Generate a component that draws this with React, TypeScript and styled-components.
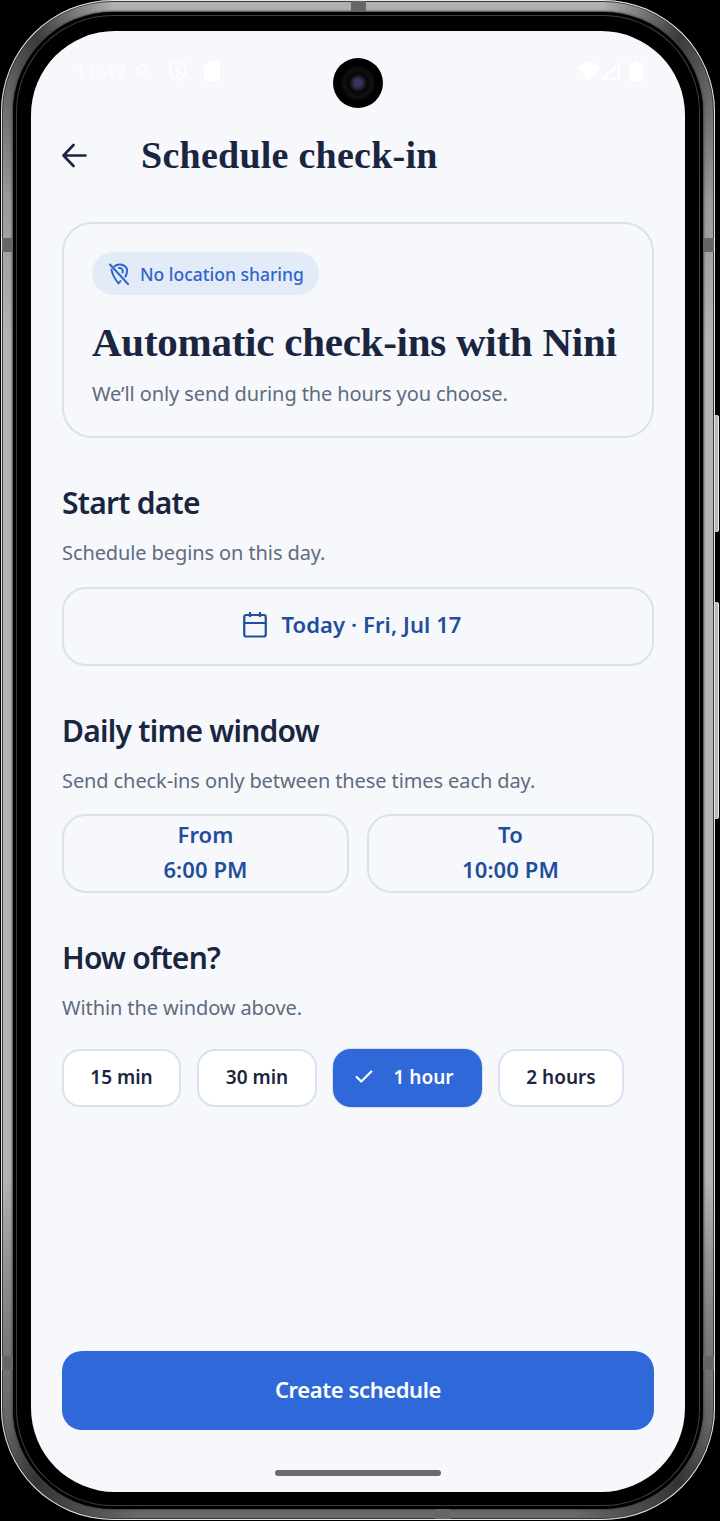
import React from 'react';
import styled, { createGlobalStyle } from 'styled-components';
import { Check } from 'lucide-react';

const GlobalStyle = createGlobalStyle`
  html, body {
    margin: 0;
    padding: 0;
    background: #000;
  }
  * {
    box-sizing: border-box;
  }
`;

const sans = `"Noto Sans", "Open Sans", sans-serif`;
const serif = `"Liberation Serif", "Noto Serif", serif`;

const Page = styled.div`
  width: 720px;
  height: 1521px;
  padding: 0 5px 1px 1px;
  background: #000;
  overflow: hidden;
`;

const Device = styled.div`
  position: relative;
  width: 714px;
  height: 1520px;
  padding: 12px 12px 11px 12px;
  border-radius: 112px;
  background: conic-gradient(
    #b0b0b0 0deg 18deg,
    #3a3a3a 24deg,
    #9a9a9a 32deg,
    #b4b4b4 40deg 140deg,
    #666 152deg,
    #333 156deg,
    #6a6a6a 164deg 196deg,
    #333 204deg,
    #666 208deg,
    #b4b4b4 220deg 320deg,
    #9a9a9a 328deg,
    #3a3a3a 336deg,
    #b0b0b0 342deg
  );
  box-shadow: inset 0 0 0 1px #e4e4e4, inset 0 0 0 2px #3a3a3a;
`;

const Bezel = styled.div`
  height: 100%;
  padding: 19px 18px 17px 18px;
  border-radius: 100px;
  background: #000;
  box-shadow: 0 0 2px 1px #444, inset 0 0 0 3px #000, inset 0 0 0 4px #3e3e3e;
`;

const Screen = styled.div`
  position: relative;
  height: 100%;
  padding: 0 31px;
  display: flex;
  flex-direction: column;
  border-radius: 84px;
  background: #f6f8fc;
  overflow: hidden;
`;

const Antenna = styled.span<{ $side: 'top' | 'bottom' | 'left' | 'right'; $at: number }>`
  position: absolute;
  background: #666;
  ${p =>
    p.$side === 'left' || p.$side === 'right'
      ? `top: ${p.$at}px; height: 14px; width: 11px; ${p.$side}: 1px;`
      : `left: ${p.$at}px; width: 15px; height: 10px; ${p.$side}: 1px;`}
`;

const SideKey = styled.span<{ $top: number; $height: number }>`
  position: absolute;
  right: -4px;
  top: ${p => p.$top}px;
  height: ${p => p.$height}px;
  width: 4px;
  border-radius: 0 3px 3px 0;
  background: #b9b9b9;
  box-shadow: inset -1px 0 0 #f2f2f2;
`;

const Camera = styled.div`
  position: absolute;
  top: 27px;
  left: 302px;
  width: 50px;
  height: 50px;
  border-radius: 50%;
  background: radial-gradient(circle, #3a3560 0 3px, #1a1a24 7px, #060606 9px, #111 14px, #000 18px);
`;

const StatusBar = styled.div`
  height: 80px;
  margin: 0 11px 0 13px;
  flex: none;
  display: flex;
  align-items: center;
  justify-content: space-between;
  color: #ffffff;
`;

const StatusGroup = styled.div<{ $gap: number }>`
  display: flex;
  align-items: center;
  gap: ${p => p.$gap}px;
`;

const StatusTime = styled.span`
  margin-right: -7px;
  font-family: ${sans};
  font-size: 20px;
  opacity: 0.85;
`;

const Header = styled.header`
  height: 88px;
  flex: none;
  display: flex;
  align-items: center;
  gap: 54px;
  color: #1a2540;
`;

const ScreenTitle = styled.h1`
  margin: 0;
  font-family: ${serif};
  font-size: 38px;
  font-weight: 700;
  letter-spacing: 0.25px;
  color: #1a2540;
`;

const IntroCard = styled.section`
  flex: none;
  height: 216px;
  margin-top: 23px;
  padding: 28px 28px 0;
  border: 2px solid #d7e2f0;
  border-radius: 30px;
`;

const Badge = styled.div`
  display: inline-flex;
  align-items: center;
  gap: 11px;
  height: 43px;
  padding: 0 15px 0 17px;
  border-radius: 22px;
  background: #e3ebf9;
  color: #2f66c8;
  font-family: ${sans};
  font-size: 17.5px;
  font-weight: 500;
`;

const IntroTitle = styled.h2`
  margin: 21px 0 0;
  font-family: ${serif};
  font-size: 41px;
  line-height: 52px;
  font-weight: 700;
  letter-spacing: -0.25px;
  white-space: nowrap;
  color: #1a2540;
`;

const Hint = styled.p`
  margin: 0;
  font-family: ${sans};
  font-size: 20px;
  line-height: 28px;
  letter-spacing: -0.1px;
  color: #5f6b7e;
`;

const IntroHint = styled(Hint)`
  margin-top: 12px;
`;

const Section = styled.section`
  flex: none;
  margin-top: 43px;
  display: flex;
  flex-direction: column;
`;

const SectionTitle = styled.h3`
  margin: 0 0 14px;
  font-family: ${sans};
  font-size: 30px;
  line-height: 44px;
  font-weight: 600;
  letter-spacing: -0.75px;
  color: #1a2540;
`;

const OutlineButton = styled.button`
  width: 100%;
  height: 79px;
  padding: 0 0 4px;
  border: 2px solid #d7e2f0;
  border-radius: 24px;
  background: transparent;
  color: #1f4e9c;
  font-family: ${sans};
  font-size: 22px;
  font-weight: 600;
  letter-spacing: 0.1px;
  line-height: 35px;
  display: flex;
  align-items: center;
  justify-content: center;
`;

const DateButton = styled(OutlineButton)`
  margin-top: 20px;
  padding-right: 11px;
  gap: 14px;
`;

const TimeRow = styled.div`
  display: grid;
  grid-template-columns: 1fr 1fr;
  gap: 18px;
  margin-top: 19px;
`;

const TimeButton = styled(OutlineButton)`
  flex-direction: column;
`;

const ChipRow = styled.div`
  display: flex;
  gap: 16px;
  margin-top: 27px;
`;

const Chip = styled.button<{ $selected?: boolean; $width: number }>`
  width: ${p => p.$width}px;
  height: 58px;
  padding: 0 ${p => (p.$selected ? '8px' : '0')} 2px 0;
  border: 2px solid ${p => (p.$selected ? '#2f68d8' : '#d9e3f0')};
  border-radius: 18px;
  background: ${p => (p.$selected ? '#2f68d8' : '#fff')};
  box-shadow: ${p => (p.$selected ? '0 0 0 1px #d9e3f0' : 'none')};
  color: ${p => (p.$selected ? '#fff' : '#1a2540')};
  font-family: ${sans};
  font-size: 19px;
  font-weight: 600;
  display: flex;
  align-items: center;
  justify-content: center;
  gap: 18px;
`;

const PrimaryButton = styled.button`
  flex: none;
  height: 79px;
  margin-top: auto;
  padding: 0 0 3px;
  border: none;
  border-radius: 20px;
  background: #2f68d8;
  color: #fff;
  font-family: ${sans};
  font-size: 22px;
  font-weight: 600;
  letter-spacing: -0.4px;
`;

const HomeBar = styled.div`
  flex: none;
  width: 166px;
  height: 6px;
  margin: 40px auto 16px;
  border-radius: 3px;
  background: #6b6b6b;
`;

const BackArrow = () => (
  <svg width="25" height="25" viewBox="0 0 25 25" fill="none" stroke="currentColor" strokeWidth="2.6" strokeLinecap="round" strokeLinejoin="round">
    <path d="M23.5 12.5 H1.8 M11.5 2 L1.5 12.5 L11.5 23" />
  </svg>
);

const CalendarIcon = () => (
  <svg width="24" height="27" viewBox="0 0 24 27" fill="none" stroke="currentColor" strokeWidth="2.2" strokeLinejoin="round">
    <rect x="1.25" y="4" width="21.5" height="21.5" rx="2" />
    <path d="M1.25 12 H22.75 M7 1 V6 M17 1 V6" />
  </svg>
);

const NoLocationIcon = () => (
  <svg width="20" height="22" viewBox="0 0 20 22" fill="none" stroke="currentColor" strokeWidth="2" strokeLinecap="round" strokeLinejoin="round">
    <path d="M5.5 3.5 C8 0.5 15 0.5 17.5 5 C19 8.5 17.5 11.5 16.5 13.5" />
    <path d="M2.5 6.5 C3 11 6 16 9.5 20.5 L11.5 18" />
    <path d="M10 5 C13 4.5 14.5 7.5 13.5 9.5" />
    <path d="M1 1.5 L19 21" />
  </svg>
);

const WifiIcon = () => (
  <svg width="23" height="18" viewBox="0 0 23 18" fill="#fff">
    <path d="M0 5 Q11.5 -4 23 5 L11.5 18 Z" />
  </svg>
);

const SignalIcon = () => (
  <svg width="28" height="18" viewBox="0 0 28 18" fill="none" stroke="#fff" strokeWidth="2">
    <path d="M1.5 17 L18 1.5 V17 Z" />
  </svg>
);

const BatteryIcon = () => (
  <svg width="13" height="20" viewBox="0 0 13 20" fill="#fff">
    <path d="M4 0 H9 V2 H13 V20 H0 V2 H4 Z" />
  </svg>
);

const CheckCircleIcon = () => (
  <svg width="16" height="16" viewBox="0 0 16 16" fill="none" stroke="#fff" strokeWidth="1.6">
    <path d="M13 3.5 A6.6 6.6 0 1 0 14.6 8" />
    <path d="M5 8 L7.4 10.2 L12 5" />
  </svg>
);

const ShieldIcon = () => (
  <svg width="18" height="20" viewBox="0 0 18 20" fill="none" stroke="#fff" strokeWidth="1.8">
    <path d="M1.5 3 L9 1 L16.5 3 V10 C16.5 14 13 17.5 9 19 C5 17.5 1.5 14 1.5 10 Z" />
    <path d="M11.5 5 L7 9 L11 12 L8 16" />
  </svg>
);

const SdCardIcon = () => (
  <svg width="16" height="20" viewBox="0 0 16 20" fill="#fff">
    <path d="M6 0 H16 V20 H0 V6 Z" />
  </svg>
);

const App = () => (
  <Page>
    <GlobalStyle />
    <Device>
      <Antenna $side="left" $at={238} />
      <Antenna $side="right" $at={238} />
      <Antenna $side="left" $at={1356} />
      <Antenna $side="right" $at={1356} />
      <Antenna $side="top" $at={350} />
      <Antenna $side="bottom" $at={434} />
      <SideKey $top={415} $height={117} />
      <SideKey $top={602} $height={217} />
      <Bezel>
        <Screen>
          <Camera />
          <StatusBar>
            <StatusGroup $gap={17}>
              <StatusTime>11:47</StatusTime>
              <CheckCircleIcon />
              <ShieldIcon />
              <SdCardIcon />
            </StatusGroup>
            <StatusGroup $gap={1}>
              <WifiIcon />
              <SignalIcon />
              <BatteryIcon />
            </StatusGroup>
          </StatusBar>
          <Header>
            <BackArrow />
            <ScreenTitle>Schedule check-in</ScreenTitle>
          </Header>
          <IntroCard>
            <Badge>
              <NoLocationIcon />
              No location sharing
            </Badge>
            <IntroTitle>Automatic check-ins with Nini</IntroTitle>
            <IntroHint>We’ll only send during the hours you choose.</IntroHint>
          </IntroCard>
          <Section>
            <SectionTitle>Start date</SectionTitle>
            <Hint>Schedule begins on this day.</Hint>
            <DateButton>
              <CalendarIcon />
              Today · Fri, Jul 17
            </DateButton>
          </Section>
          <Section>
            <SectionTitle>Daily time window</SectionTitle>
            <Hint>Send check-ins only between these times each day.</Hint>
            <TimeRow>
              <TimeButton>
                <span>From</span>
                <span>6:00 PM</span>
              </TimeButton>
              <TimeButton>
                <span>To</span>
                <span>10:00 PM</span>
              </TimeButton>
            </TimeRow>
          </Section>
          <Section>
            <SectionTitle>How often?</SectionTitle>
            <Hint>Within the window above.</Hint>
            <ChipRow>
              <Chip $width={119}>15 min</Chip>
              <Chip $width={120}>30 min</Chip>
              <Chip $width={149} $selected>
                <Check size={22} strokeWidth={2.4} />
                1 hour
              </Chip>
              <Chip $width={126}>2 hours</Chip>
            </ChipRow>
          </Section>
          <PrimaryButton>Create schedule</PrimaryButton>
          <HomeBar />
        </Screen>
      </Bezel>
    </Device>
  </Page>
);

export default App;
